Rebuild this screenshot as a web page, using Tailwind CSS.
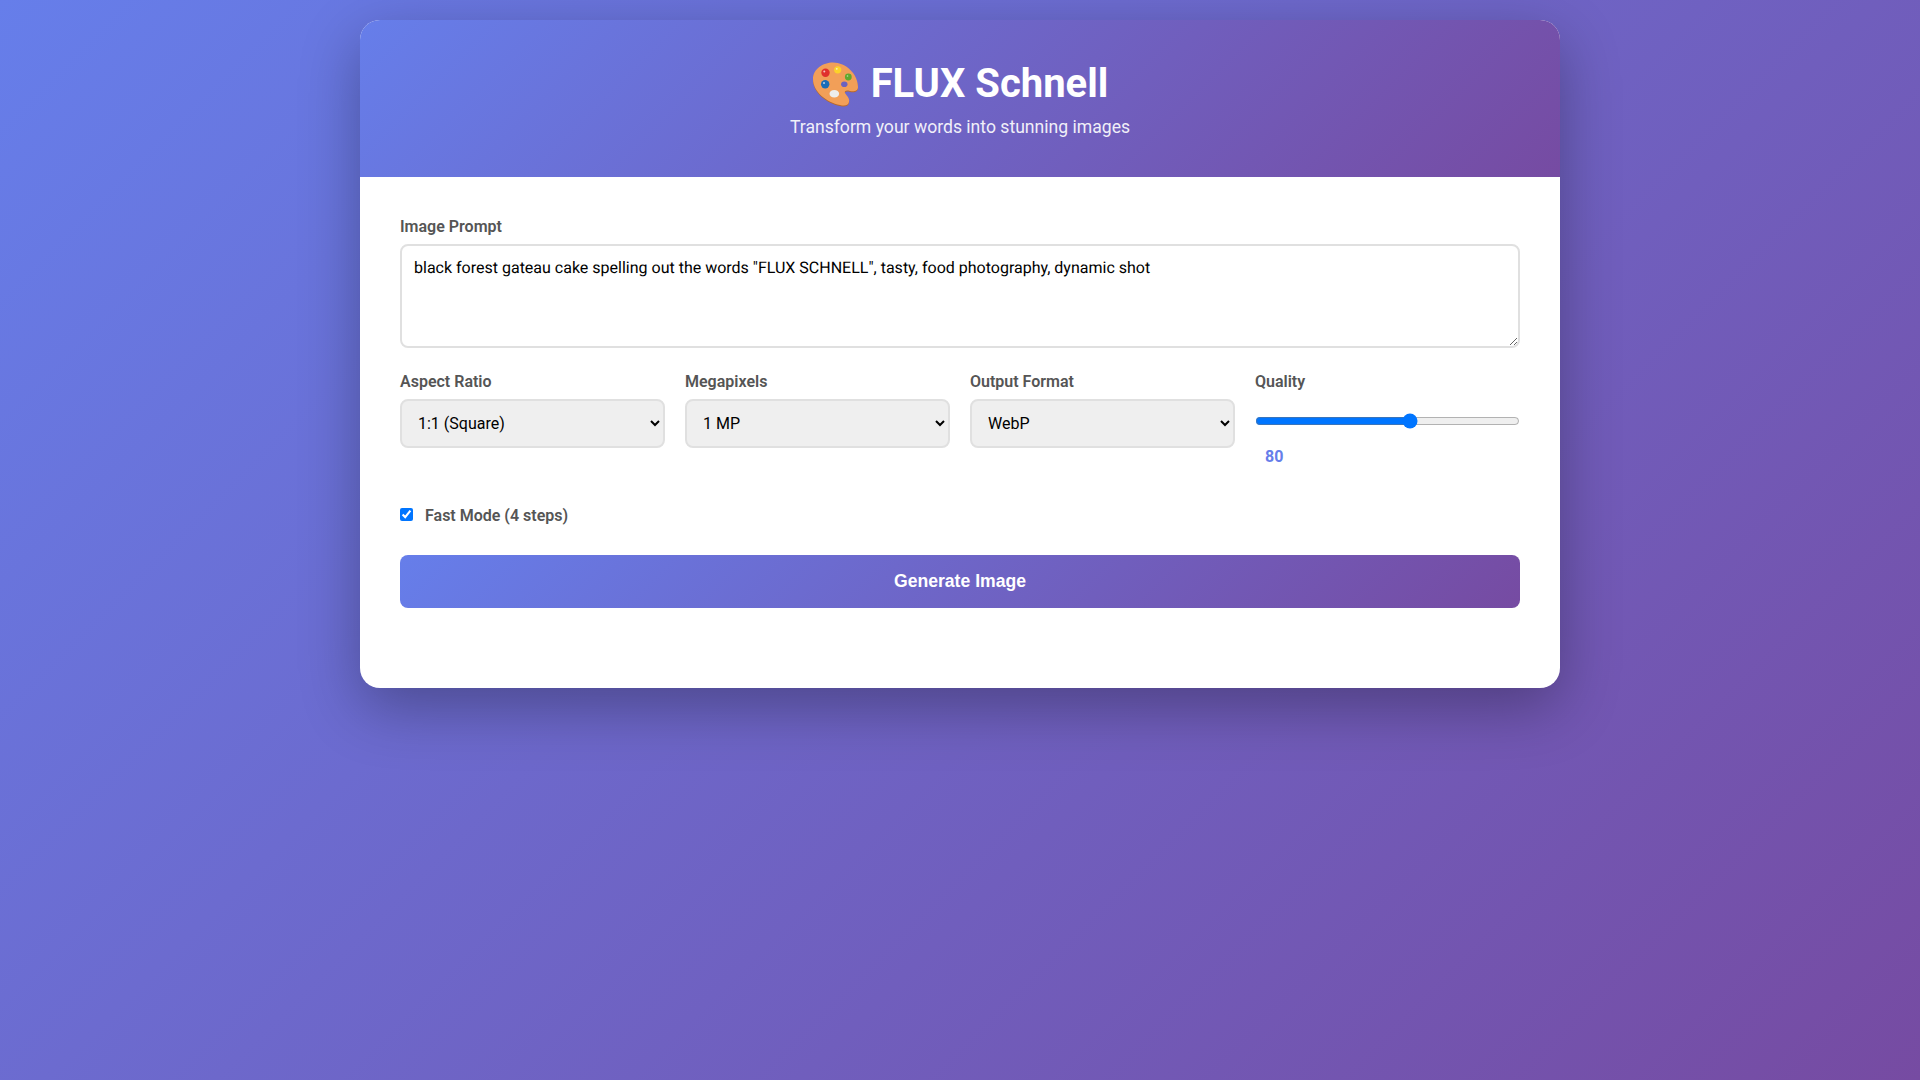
<!DOCTYPE html>
<html lang="en">
<head>
    <meta charset="UTF-8">
    <meta name="viewport" content="width=device-width, initial-scale=1.0">
    <title>FLUX Schnell</title>
    <script src="https://cdn.jsdelivr.net/npm/@tailwindcss/browser@4"></script>
</head>
<body class="min-h-screen p-5 bg-[linear-gradient(135deg,#667eea_0%,#764ba2_100%)] font-['Roboto',sans-serif] leading-[normal]">
    <div class="max-w-[1200px] mx-auto bg-white rounded-[20px] overflow-hidden shadow-[0_20px_60px_rgba(0,0,0,0.3)]">
        <header class="p-10 text-center text-white bg-[linear-gradient(135deg,#667eea_0%,#764ba2_100%)]">
            <h1 class="h-[47px] text-[40px] font-bold mb-2.5 flex items-center justify-center gap-[11px]">
                <svg class="w-[48px] h-[48px] shrink-0" viewBox="0 0 48 48">
                    <path d="M1 20C1 10 11 3.500 21 3.500C34 3.500 46 15 46 28C46 32 42 33 38 32C34 31 32 32 33 34C34 36 38 39 37 43C36 47 32 47 28 46C15 43.500 1 33 1 20Z" fill="#b8692c"/>
                    <path d="M1 19C1 9 11 2.500 21 2.500C34 2.500 46 14 46 27C46 31 42 32 38 31C34 30 32 31 33 33C34 35 38 38 37 42C36 46 32 46 28 45C15 42.500 1 32 1 19Z" fill="#f29f58"/>
                    <ellipse cx="32.300" cy="24.300" rx="3.200" ry="2.800" fill="#6c62c0"/>
                    <circle cx="13.500" cy="12.700" r="4.200" fill="#e0302c"/>
                    <circle cx="12.300" cy="11.500" r="1" fill="#ffffff" opacity="0.7"/>
                    <circle cx="25.700" cy="9.800" r="3.600" fill="#fcd22a"/>
                    <circle cx="24.800" cy="8.800" r="0.900" fill="#ffffff" opacity="0.7"/>
                    <circle cx="36.300" cy="17" r="3.400" fill="#5fa82f"/>
                    <circle cx="35.500" cy="16" r="0.800" fill="#ffffff" opacity="0.6"/>
                    <circle cx="13.200" cy="24.300" r="4.200" fill="#1a6db8"/>
                    <circle cx="12" cy="23" r="1" fill="#ffffff" opacity="0.7"/>
                    <ellipse cx="22.300" cy="33.700" rx="4.800" ry="3.800" fill="#ededed"/>
                </svg>
                <span>FLUX Schnell</span>
            </h1>
            <p class="text-[17.6px] opacity-90">Transform your words into stunning images</p>
        </header>

        <main class="px-10 pt-10 pb-20">
            <label class="block mb-2 text-[16px] font-semibold text-[#555555]">Image Prompt</label>
            <textarea class="block w-full h-[104px] px-3 py-3 border-2 border-[#e0e0e0] rounded-lg text-[16px] text-black resize-y mb-6 [text-rendering:geometricPrecision]">black forest gateau cake spelling out the words "FLUX SCHNELL", tasty, food photography, dynamic shot</textarea>

            <div class="grid grid-cols-4 gap-5 mb-10">
                <div>
                    <label class="block mb-2 text-[16px] font-semibold text-[#555555]">Aspect Ratio</label>
                    <select class="w-full px-3 py-3 border-2 border-[#e0e0e0] rounded-lg bg-[#efefef] text-[16px] text-black">
                        <option>1:1 (Square)</option>
                        <option>16:9 (Landscape)</option>
                        <option>9:16 (Portrait)</option>
                    </select>
                </div>
                <div>
                    <label class="block mb-2 text-[16px] font-semibold text-[#555555]">Megapixels</label>
                    <select class="w-full px-3 py-3 border-2 border-[#e0e0e0] rounded-lg bg-[#efefef] text-[16px] text-black">
                        <option>1 MP</option>
                        <option>0.25 MP</option>
                    </select>
                </div>
                <div>
                    <label class="block mb-2 text-[16px] font-semibold text-[#555555]">Output Format</label>
                    <select class="w-full px-3 py-3 border-2 border-[#e0e0e0] rounded-lg bg-[#efefef] text-[16px] text-black">
                        <option>WebP</option>
                        <option>PNG</option>
                        <option>JPG</option>
                    </select>
                </div>
                <div>
                    <label class="block mb-2 text-[16px] font-semibold text-[#555555]">Quality</label>
                    <input type="range" min="51" max="100" value="80" class="block w-full mt-[22px]">
                    <span class="inline-block ml-2.5 mt-[18px] text-[16px] font-bold text-[#667eea]">80</span>
                </div>
            </div>

            <div class="flex items-center gap-3 mb-[30px]">
                <input type="checkbox" checked class="mb-0.5">
                <label class="text-[16px] font-semibold text-[#555555]">Fast Mode (4 steps)</label>
            </div>

            <button type="button" class="block w-full py-4 rounded-lg text-white text-[17.6px] font-bold font-['Liberation_Sans',sans-serif] bg-[linear-gradient(135deg,#667eea_0%,#764ba2_100%)]">Generate Image</button>
        </main>
    </div>
</body>
</html>
